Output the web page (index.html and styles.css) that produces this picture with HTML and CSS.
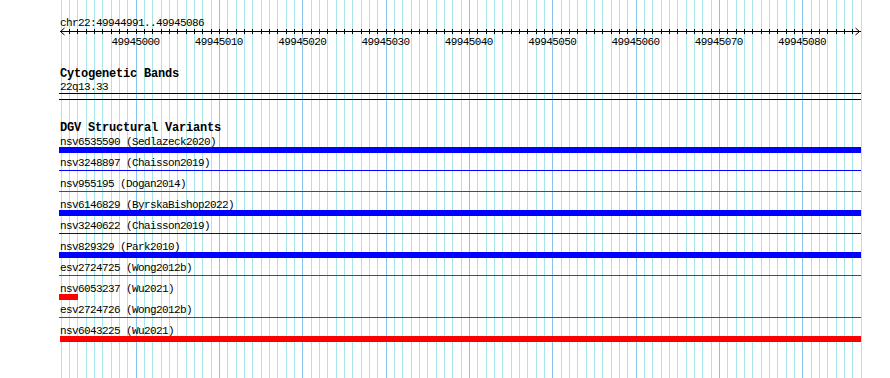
FILE: index.html
```html
<!DOCTYPE html>
<html lang="en">
<head>
  <meta charset="UTF-8" />
  <title>chr22:49944991..49945086</title>
  <link rel="stylesheet" href="styles.css">
</head>
<body>
  <div class="browser">
    <div class="grid" id="grid"></div>

    <div class="ruler">
      <div class="ruler-title">chr22:49944991..49945086</div>
      <svg class="axis" id="axis" width="803" height="9" viewBox="0 0 803 9">
        <rect x="1" y="4" width="801" height="1" fill="#000" />
        <polyline points="5.5,1 1.5,4.5 5.5,8" fill="none" stroke="#000" />
        <polyline points="796.5,1 800.5,4.5 796.5,8" fill="none" stroke="#000" />
      </svg>
      <div class="ruler-labels">
        <span>49945000</span>
        <span>49945010</span>
        <span>49945020</span>
        <span>49945030</span>
        <span>49945040</span>
        <span>49945050</span>
        <span>49945060</span>
        <span>49945070</span>
        <span>49945080</span>
      </div>
    </div>

    <section class="track track-cyto">
      <h2 class="track-title">Cytogenetic Bands</h2>
      <div class="band-label">22q13.33</div>
      <div class="band-line"></div>
      <div class="band-line band-line-bottom"></div>
    </section>

    <section class="track track-dgv">
      <h2 class="track-title">DGV Structural Variants</h2>
      <div class="features">
        <div class="feature">
          <div class="feature-label">nsv6535590 (Sedlazeck2020)</div>
          <div class="glyph"><div class="bar gain"></div></div>
        </div>
        <div class="feature">
          <div class="feature-label">nsv3248897 (Chaisson2019)</div>
          <div class="glyph"><div class="line gain"></div></div>
        </div>
        <div class="feature">
          <div class="feature-label">nsv955195 (Dogan2014)</div>
          <div class="glyph"><div class="line loss"></div></div>
        </div>
        <div class="feature">
          <div class="feature-label">nsv6146829 (ByrskaBishop2022)</div>
          <div class="glyph"><div class="bar gain"></div></div>
        </div>
        <div class="feature">
          <div class="feature-label">nsv3240622 (Chaisson2019)</div>
          <div class="glyph"><div class="line gain-dark"></div></div>
        </div>
        <div class="feature">
          <div class="feature-label">nsv829329 (Park2010)</div>
          <div class="glyph"><div class="bar gain"></div></div>
        </div>
        <div class="feature">
          <div class="feature-label">esv2724725 (Wong2012b)</div>
          <div class="glyph"><div class="line loss"></div></div>
        </div>
        <div class="feature">
          <div class="feature-label">nsv6053237 (Wu2021)</div>
          <div class="glyph"><div class="bar loss bar-short"></div></div>
        </div>
        <div class="feature">
          <div class="feature-label">esv2724726 (Wong2012b)</div>
          <div class="glyph"><div class="line loss"></div></div>
        </div>
        <div class="feature">
          <div class="feature-label">nsv6043225 (Wu2021)</div>
          <div class="glyph"><div class="bar loss bar-inset"></div></div>
        </div>
      </div>
    </section>
  </div>

  <script>
    document.addEventListener('DOMContentLoaded', function() {
      const grid = document.getElementById('grid');
      const axis = document.getElementById('axis');
      const svgNS = 'http://www.w3.org/2000/svg';

      // 96 bases across 800px, one grid line per base
      for (let k = 0; k <= 96; k++) {
        const x = Math.round(60.5 + k * 800 / 96);

        const line = document.createElement('span');
        if (k % 10 === 9) line.className = 'major';
        line.style.left = x + 'px';
        grid.appendChild(line);

        // ticks on the scale, the ends are covered by the arrows
        if (k > 0 && k < 96) {
          const tick = document.createElementNS(svgNS, 'rect');
          tick.setAttribute('x', x - 59);
          tick.setAttribute('y', 2);
          tick.setAttribute('width', 1);
          tick.setAttribute('height', 5);
          tick.setAttribute('fill', '#000');
          axis.appendChild(tick);
        }
      }
    });
  </script>
</body>
</html>
```

FILE: styles.css
```css
* {
  margin: 0;
  padding: 0;
  box-sizing: border-box;
}

body {
  background: #ffffff;
  color: #000000;
  font-family: "Liberation Mono", "DejaVu Sans Mono", monospace;
}

.browser {
  position: relative;
  width: 890px;
  height: 378px;
  overflow: hidden;
  background: #ffffff;
}

/* vertical base grid behind everything */
.grid {
  position: absolute;
  top: 0;
  left: 0;
  width: 100%;
  height: 100%;
}

.grid span {
  position: absolute;
  top: 0;
  bottom: 0;
  width: 1px;
  background: #a8e6ec;
}

.grid span.major {
  background: #88c4ec;
}

.ruler,
.track {
  position: relative;
  margin-left: 59px;
  width: 802px;
}

/* small font: 6px per char */
.ruler-title,
.ruler-labels,
.band-label,
.feature-label {
  font-size: 11px;
  letter-spacing: -0.6px;
  white-space: nowrap;
}

/* bold font: 7px per char */
.track-title {
  font-size: 12px;
  font-weight: 700;
  letter-spacing: -0.2px;
  line-height: 12px;
  height: 12px;
  padding-left: 1px;
  white-space: nowrap;
}

.ruler {
  padding-top: 17px;
}

.ruler-title {
  line-height: 12px;
  height: 12px;
  padding-left: 1px;
}

.axis {
  display: block;
  margin-top: -2px;
  overflow: visible;
}

.ruler-labels {
  display: flex;
  padding-left: 34.83px;
  line-height: 12px;
  height: 12px;
}

.ruler-labels span {
  flex: none;
  width: 83.333px;
  text-align: center;
}

.track-cyto {
  margin-top: 20px;
}

.band-label {
  line-height: 12px;
  height: 12px;
  margin-top: 1px;
  padding-left: 1px;
}

.band-line {
  height: 1px;
  background: #000000;
}

.band-line-bottom {
  margin-top: 5px;
}

.track-dgv {
  margin-top: 22px;
}

.features {
  padding-top: 3px;
}

.feature {
  padding-bottom: 5px;
}

.feature-label {
  line-height: 10px;
  height: 10px;
  padding-left: 1px;
}

.glyph {
  height: 6px;
}

.bar {
  height: 6px;
}

.line {
  height: 1px;
  position: relative;
  top: 2px;
}

.bar-short {
  width: 19px;
}

.bar-inset {
  margin-left: 1px;
}

.gain {
  background: #0000ff;
}

.gain-dark {
  background: #0000cc;
}

.loss {
  background: #ff0000;
}
```
